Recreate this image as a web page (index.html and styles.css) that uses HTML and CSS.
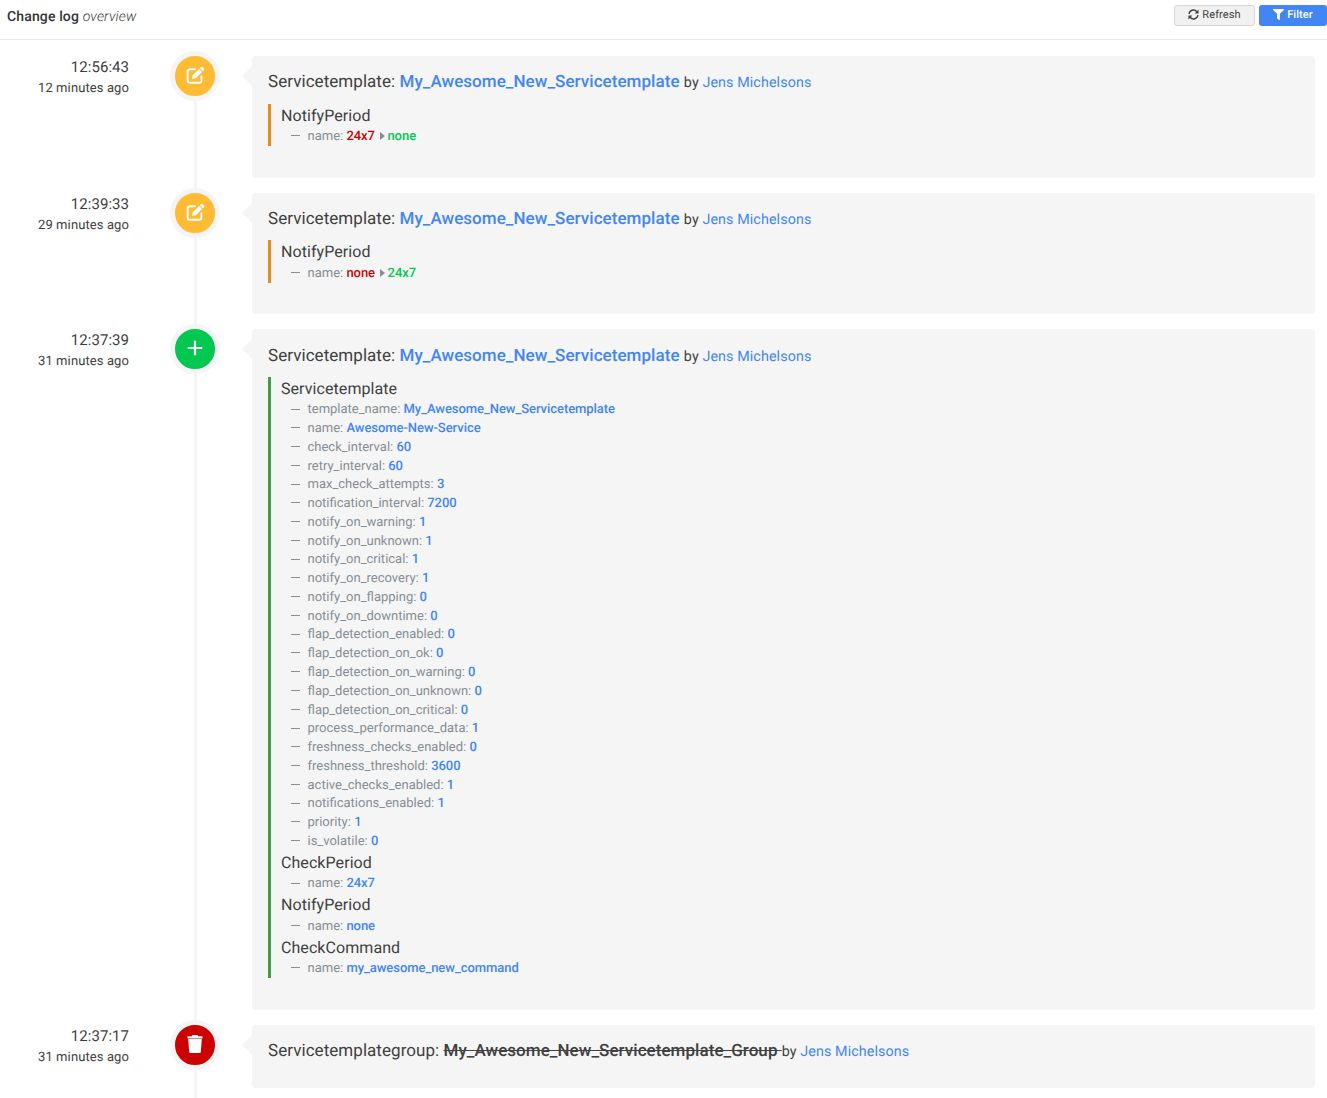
FILE: index.html
```
<!DOCTYPE html>
<html lang="en">
<head>
<meta charset="utf-8">
<title>Change log</title>
<link rel="stylesheet" href="styles.css">
</head>
<body>
<svg class="sprite" aria-hidden="true">
  <symbol id="edit" viewBox="0 0 19 18"><path d="M9 3.200H4.200Q1.600 3.200 1.600 5.800v8.400q0 2.600 2.600 2.600h8.600q2.600 0 2.600-2.600V10.500" fill="none" stroke="currentColor" stroke-width="2" stroke-linecap="round"/><path d="M5.900 13.100l.8-3.900L13 2.900l3.100 3.100-6.300 6.300zM13.700 2.200l1-1q1.100-1 2.200 0l.9.9q1 1.100 0 2.200l-1 1z"/></symbol>
  <symbol id="plus" viewBox="0 0 16 16"><path d="M8 1.600v12.800M1.600 8h12.800" fill="none" stroke="currentColor" stroke-width="2.200" stroke-linecap="round"/></symbol>
  <symbol id="trash" viewBox="0 0 16 18"><path d="M.5 1.300h4.300L5.500 0h5l.7 1.300h4.300v2.200H.5zM1.200 4.100h13.600l-1 12.900q-.1 1-1.200 1H3.400q-1.100 0-1.200-1z"/></symbol>
  <symbol id="sync" viewBox="0 0 12 12"><path d="M1.200 5.400A4.700 4.700 0 0 1 9.600 3M10.800 6.600A4.700 4.700 0 0 1 2.400 9" fill="none" stroke="currentColor" stroke-width="1.500"/><path d="M11.500.6v4.200H7.300zM.5 11.400V7.200h4.200z"/></symbol>
  <symbol id="filter" viewBox="0 0 512 512"><path d="M488 0H24C2.700 0-8 25.900 7.100 41L192 225.900V432c0 7.800 3.800 15.200 10.200 19.700l80 56C298 518.700 320 507.500 320 488V225.900L504.900 41C520 25.900 509.300 0 488 0z"/></symbol>
</svg>
<header class="toolbar">
  <h1 class="title">Change log <em>overview</em></h1>
  <div class="actions">
    <a class="btn btn-default"><svg class="btn-icon"><use href="#sync"/></svg>Refresh</a>
    <a class="btn btn-primary"><svg class="btn-icon"><use href="#filter"/></svg>Filter</a>
  </div>
</header>
<main class="timeline">
  <article class="entry">
    <div class="time"><div class="clock">12:56:43</div><div class="ago">12 minutes ago</div></div>
    <div class="rail"><div class="dot dot-edit"><svg class="icon-edit"><use href="#edit"/></svg></div></div>
    <section class="card">
      <h2 class="heading"><span class="kind">Servicetemplate:</span> <a class="object">My_Awesome_New_Servicetemplate</a> <small>by <a>Jens Michelsons</a></small></h2>
      <div class="changes changes-edit">
        <h3>NotifyPeriod</h3>
        <ul><li>name: <b class="old">24x7</b><i class="caret"></i><b class="new">none</b></li></ul>
      </div>
    </section>
  </article>
  <article class="entry">
    <div class="time"><div class="clock">12:39:33</div><div class="ago">29 minutes ago</div></div>
    <div class="rail"><div class="dot dot-edit"><svg class="icon-edit"><use href="#edit"/></svg></div></div>
    <section class="card">
      <h2 class="heading"><span class="kind">Servicetemplate:</span> <a class="object">My_Awesome_New_Servicetemplate</a> <small>by <a>Jens Michelsons</a></small></h2>
      <div class="changes changes-edit">
        <h3>NotifyPeriod</h3>
        <ul><li>name: <b class="old">none</b><i class="caret"></i><b class="new">24x7</b></li></ul>
      </div>
    </section>
  </article>
  <article class="entry">
    <div class="time"><div class="clock">12:37:39</div><div class="ago">31 minutes ago</div></div>
    <div class="rail"><div class="dot dot-add"><svg class="icon-plus"><use href="#plus"/></svg></div></div>
    <section class="card">
      <h2 class="heading"><span class="kind">Servicetemplate:</span> <a class="object">My_Awesome_New_Servicetemplate</a> <small>by <a>Jens Michelsons</a></small></h2>
      <div class="changes changes-add">
        <h3>Servicetemplate</h3>
        <ul>
          <li>template_name: <b>My_Awesome_New_Servicetemplate</b></li>
          <li>name: <b>Awesome-New-Service</b></li>
          <li>check_interval: <b>60</b></li>
          <li>retry_interval: <b>60</b></li>
          <li>max_check_attempts: <b>3</b></li>
          <li>notification_interval: <b>7200</b></li>
          <li>notify_on_warning: <b>1</b></li>
          <li>notify_on_unknown: <b>1</b></li>
          <li>notify_on_critical: <b>1</b></li>
          <li>notify_on_recovery: <b>1</b></li>
          <li>notify_on_flapping: <b>0</b></li>
          <li>notify_on_downtime: <b>0</b></li>
          <li>flap_detection_enabled: <b>0</b></li>
          <li>flap_detection_on_ok: <b>0</b></li>
          <li>flap_detection_on_warning: <b>0</b></li>
          <li>flap_detection_on_unknown: <b>0</b></li>
          <li>flap_detection_on_critical: <b>0</b></li>
          <li>process_performance_data: <b>1</b></li>
          <li>freshness_checks_enabled: <b>0</b></li>
          <li>freshness_threshold: <b>3600</b></li>
          <li>active_checks_enabled: <b>1</b></li>
          <li>notifications_enabled: <b>1</b></li>
          <li>priority: <b>1</b></li>
          <li>is_volatile: <b>0</b></li>
        </ul>
        <h3>CheckPeriod</h3>
        <ul><li>name: <b>24x7</b></li></ul>
        <h3>NotifyPeriod</h3>
        <ul><li>name: <b>none</b></li></ul>
        <h3>CheckCommand</h3>
        <ul><li>name: <b>my_awesome_new_command</b></li></ul>
      </div>
    </section>
  </article>
  <article class="entry">
    <div class="time"><div class="clock">12:37:17</div><div class="ago">31 minutes ago</div></div>
    <div class="rail"><div class="dot dot-delete"><svg class="icon-trash"><use href="#trash"/></svg></div></div>
    <section class="card">
      <h2 class="heading"><span class="kind">Servicetemplategroup:</span> <s class="object">My_Awesome_New_Servicetemplate_Group </s><small>by <a>Jens Michelsons</a></small></h2>
    </section>
  </article>
</main>
</body>
</html>
```
FILE: styles.css
```
* { box-sizing: border-box; }
body {
  margin: 0;
  height: 1098px;
  overflow: hidden;
  display: flex;
  flex-direction: column;
  background: #fff;
  color: #404040;
  font-family: Roboto, sans-serif;
  font-size: 13px;
  text-rendering: geometricPrecision;
}
h1, h2, h3, ul { margin: 0; padding: 0; font-weight: 400; }
a, b { color: #4285f4; }
svg { fill: currentColor; display: block; }
.sprite { display: none; }

.toolbar {
  flex: none;
  height: 40px;
  padding: 5px 0 0 7px;
  display: flex;
  align-items: flex-start;
  justify-content: space-between;
  border-bottom: 1px solid #e9e9e9;
}
.title { font-size: 14px; line-height: 24px; letter-spacing: 0.14px; font-weight: 500; color: #333; }
.title em { font-weight: 300; }
.actions { display: flex; gap: 4px; }
.btn {
  height: 21px;
  display: flex;
  align-items: center;
  justify-content: center;
  gap: 3px;
  padding-bottom: 2px;
  border-radius: 3px;
  font-size: 11px;
  letter-spacing: 0.1px;
}
.btn-default { width: 81px; color: #404040; background: #f1f1f1; border: 1px solid #d5d5d5; }
.btn-primary { width: 68px; color: #fff; background: #4285f4; font-weight: 500; }
.btn-icon { width: 11px; height: 11px; }

.timeline { flex: 1; min-height: 0; padding: 1px 12px 0 0; overflow: hidden; }
.entry { display: grid; grid-template-columns: 129px 123px minmax(0, 1fr); }
.time { padding-top: 16px; text-align: right; }
.clock { font-size: 15px; line-height: 21px; letter-spacing: 0.04px; }
.ago { font-size: 13px; line-height: 22px; letter-spacing: 0.1px; }
.rail {
  padding: 10px 0 0 41px;
  background: linear-gradient(#f5f5f5, #f5f5f5) 65px 0 / 3px 100% no-repeat;
}
.entry:first-child .rail { background-position-y: 15px; }
.dot {
  width: 50px;
  height: 50px;
  display: flex;
  align-items: center;
  justify-content: center;
  border: 5px solid #f5f5f5;
  border-radius: 50%;
  color: #fff;
}
.dot-edit { background: #ffbb33; }
.dot-add { background: #00c851; }
.dot-delete { background: #cc0000; }
.icon-edit { width: 19px; height: 18px; margin: 0 0 2px 1px; }
.icon-plus { width: 16px; height: 16px; margin-bottom: 2px; }
.icon-trash { width: 16px; height: 18px; margin-bottom: 1px; }

.card {
  position: relative;
  margin-top: 15px;
  padding: 14.45px 16px 31.5px;
  background: #f5f5f5;
  border-radius: 4px;
}
.entry:last-child .card { height: 63px; margin-bottom: 15px; padding-top: 14px; }
.card::before {
  content: "";
  position: absolute;
  left: -10px;
  top: 10px;
  border: 10px solid transparent;
  border-left: 0;
  border-right-color: #f5f5f5;
}
.heading { font-size: 17px; line-height: 24px; height: 24px; letter-spacing: 0.05px; white-space: nowrap; }
.object { font-weight: 500; }
.heading small { font-size: 14.3px; letter-spacing: 0.1px; }
.changes { margin-top: 9.35px; padding-left: 10px; border-left: 3px solid; }
.changes-edit { border-color: #df8f1c; }
.changes-add { border-color: #449d44; }
.changes h3 { font-size: 16px; line-height: 23.6px; color: #404040; letter-spacing: 0.07px; }
.changes ul { list-style: none; color: #868e96; }
.changes li { display: flex; align-items: center; height: 18.78px; white-space: pre; padding: 0 0 0.5px 10px; }
.changes li::before { content: ""; width: 9px; height: 1px; margin: 0 7.5px 1.5px 0; background: #868e96; }
.changes b { font-weight: 500; letter-spacing: -0.05px; }
.changes .old { color: #cc0000; }
.changes .new { color: #00c851; }
.caret { margin: 0 2.5px 1px 5px; border: 4px solid transparent; border-left: 5px solid #868e96; border-right: 0; }
```
